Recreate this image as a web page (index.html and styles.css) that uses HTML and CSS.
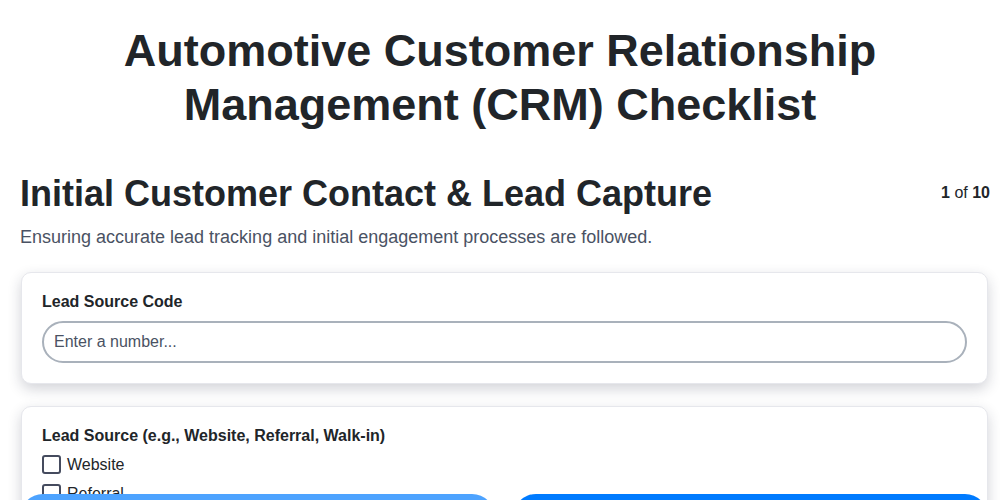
FILE: index.html
```html
<!DOCTYPE html>
<html lang="en">
<head>
<meta charset="utf-8">
<title>Automotive CRM Checklist</title>
<link rel="stylesheet" href="styles.css">
</head>
<body>
<main class="page">
  <h1 class="page-title">Automotive Customer Relationship Management (CRM) Checklist</h1>

  <section class="step">
    <header class="step-head">
      <h2 class="step-title">Initial Customer Contact &amp; Lead Capture</h2>
      <div class="step-count"><b>1</b> of <b>10</b></div>
    </header>
    <p class="step-desc">Ensuring accurate lead tracking and initial engagement processes are followed.</p>

    <div class="card">
      <label class="field-label" for="lead-code">Lead Source Code</label>
      <input class="text-input" id="lead-code" type="text" placeholder="Enter a number...">
    </div>

    <div class="card">
      <div class="field-label">Lead Source (e.g., Website, Referral, Walk-in)</div>
      <div class="options">
        <label class="option"><span class="box"></span>Website</label>
        <label class="option"><span class="box"></span>Referral</label>
        <label class="option"><span class="box"></span>Walk-in</label>
        <label class="option"><span class="box"></span>Phone</label>
      </div>
    </div>
  </section>
</main>

<nav class="pager">
  <button class="btn btn-prev" type="button">Previous</button>
  <button class="btn btn-next" type="button">Next</button>
</nav>
</body>
</html>
```

FILE: styles.css
```css
* { box-sizing: border-box; }

body {
  margin: 0;
  background: #ffffff;
  color: #212529;
  font-family: "Liberation Sans", Arial, sans-serif;
}

.page {
  padding: 24px 10px 120px 20px;
}

.page-title {
  margin: 0 0 39.5px -10px;
  padding: 0 100px;
  text-align: center;
  font-size: 45px;
  line-height: 1.2;
  font-weight: 700;
  color: #212529;
}

.step-head {
  display: flex;
  align-items: center;
  justify-content: space-between;
}

.step-title {
  margin: 0;
  font-size: 36px;
  line-height: 1.2;
  font-weight: 700;
  color: #212529;
}

.step-count {
  font-size: 16px;
  color: #212529;
}

.step-desc {
  margin: 9px 0 21px;
  font-size: 18px;
  line-height: 1.5;
  color: #4a5263;
}

.card {
  margin: 0 2px 22px 1px;
  padding: 19px 20px 20px;
  background: #ffffff;
  border: 1px solid #e6e7ec;
  border-radius: 10px;
  box-shadow: 0 5px 14px rgba(30, 35, 60, 0.2);
}

.field-label {
  display: block;
  font-size: 16px;
  line-height: 1.2;
  font-weight: 700;
  color: #212529;
}

.text-input {
  display: block;
  width: 100%;
  height: 42px;
  margin-top: 10px;
  padding: 0 10px;
  border: 2px solid #a9b1bb;
  border-radius: 21px;
  font-family: inherit;
  font-size: 16px;
  color: #212529;
  background: #ffffff;
  outline: none;
}

.text-input::placeholder { color: #4a5263; opacity: 1; }

.options {
  display: flex;
  flex-direction: column;
  gap: 10px;
  margin-top: 10px;
}

.option {
  display: flex;
  align-items: center;
  gap: 6px;
  font-size: 16px;
  line-height: 19px;
  color: #212529;
}

.box {
  width: 19px;
  height: 19px;
  border: 2px solid #454b5e;
  border-radius: 3px;
  background: #ffffff;
}

.pager {
  position: fixed;
  left: 20px;
  right: 12px;
  bottom: -40px;
  display: flex;
  gap: 18px;
}

.btn {
  flex: 1;
  height: 46px;
  border: none;
  border-radius: 23px;
  color: #ffffff;
  font-family: inherit;
  font-size: 16px;
  font-weight: 700;
}

.btn-prev { background: #4da3ff; }
.btn-next { background: #007bff; }
```
